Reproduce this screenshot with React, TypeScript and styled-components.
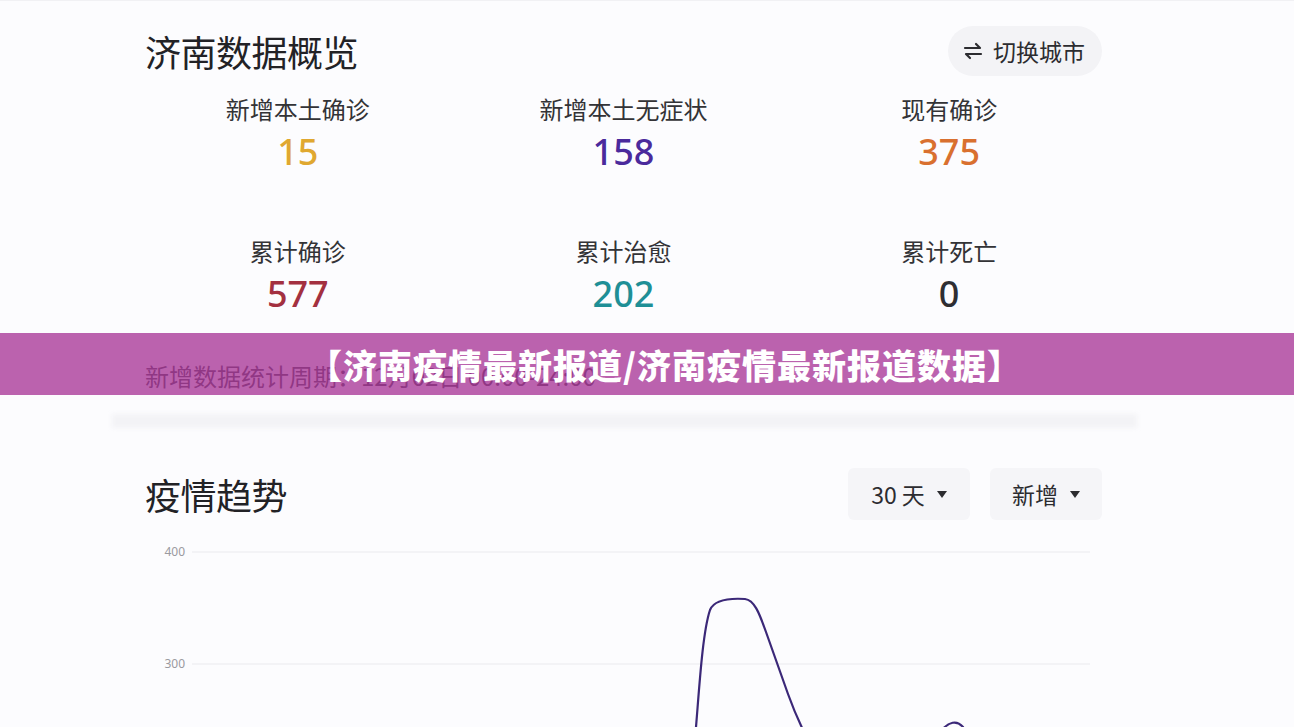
import React from 'react';
import styled, { createGlobalStyle } from 'styled-components';

const GlobalStyle = createGlobalStyle`
  html, body {
    margin: 0;
    padding: 0;
    height: 727px;
    overflow: hidden;
    background: #fcfcfe;
  }
  body {
    font-family: 'Noto Sans CJK SC', 'Noto Sans', sans-serif;
    color: #2a2a2e;
  }
`;

const Page = styled.div`
  position: relative;
  width: 1294px;
  height: 727px;
  overflow: hidden;
  border-top: 1px solid #f1f1f4;
  box-sizing: border-box;
`;

const Card = styled.div`
  width: 1025px;
  margin-left: 112px;
  padding: 25px 33px 0;
  box-sizing: border-box;
`;

const HeaderRow = styled.div`
  display: flex;
  align-items: center;
  justify-content: space-between;
  height: 50px;
`;

const Title = styled.h1`
  margin: 0;
  font-size: 36px;
  font-weight: 400;
  line-height: 50px;
  color: #222226;
  letter-spacing: -0.5px;
`;

const SwitchButton = styled.button`
  display: flex;
  align-items: center;
  gap: 10px;
  height: 50px;
  margin-right: 2px;
  padding: 0 17px 0 15px;
  border: none;
  border-radius: 25px;
  background: #f3f3f6;
  font-family: 'Noto Sans CJK SC', sans-serif;
  font-size: 23px;
  color: #2c2c30;
`;

const StatGrid = styled.div`
  display: grid;
  grid-template-columns: repeat(3, 1fr);
  row-gap: 61px;
  margin: 17px -8px 0 -10px;
`;

const Stat = styled.div`
  display: flex;
  flex-direction: column;
  align-items: center;
  gap: 5px;
`;

const StatLabel = styled.div`
  font-size: 24px;
  line-height: 32px;
  color: #333336;
`;

const StatValue = styled.div<{ $color: string }>`
  font-family: 'Noto Sans', 'Open Sans', sans-serif;
  font-size: 36px;
  font-weight: 500;
  line-height: 44px;
  color: ${(p) => p.$color};
`;

const Period = styled.div`
  margin-top: 44px;
  font-size: 24px;
  line-height: 32px;
  color: #55555c;
`;

const Divider = styled.div`
  height: 14px;
  margin: 22px -33px 0;
  background: #f3f3f6;
  filter: blur(2px);
`;

const SectionRow = styled.div`
  display: flex;
  align-items: center;
  justify-content: space-between;
  margin-top: 40px;
  height: 52px;
`;

const Filters = styled.div`
  display: flex;
  gap: 20px;
  margin-right: 2px;
`;

const Select = styled.button<{ $width: number }>`
  display: flex;
  align-items: center;
  justify-content: center;
  gap: 12px;
  width: ${(p) => p.$width}px;
  height: 52px;
  border: none;
  border-radius: 6px;
  background: #f5f5f8;
  font-family: 'Noto Sans CJK SC', 'Noto Sans', sans-serif;
  font-size: 23px;
  color: #2c2c30;
`;

const Caret = styled.span`
  width: 0;
  height: 0;
  border-left: 5px solid transparent;
  border-right: 5px solid transparent;
  border-top: 7px solid #2c2c30;
`;

const Chart = styled.svg`
  display: block;
  margin-top: 14px;
  overflow: visible;
`;

const Banner = styled.div`
  position: absolute;
  left: 0;
  right: 0;
  top: 332px;
  height: 62px;
  display: flex;
  align-items: center;
  justify-content: center;
  padding-left: 36px;
  box-sizing: border-box;
  background: rgba(164, 44, 146, 0.74);
  color: #ffffff;
  font-family: 'Noto Sans CJK SC', sans-serif;
  font-size: 34px;
  font-weight: 900;
  letter-spacing: 1px;
`;

const stats = [
  { label: '新增本土确诊', value: '15', color: '#e0a830' },
  { label: '新增本土无症状', value: '158', color: '#4a2a9c' },
  { label: '现有确诊', value: '375', color: '#d9702f' },
  { label: '累计确诊', value: '577', color: '#a33040' },
  { label: '累计治愈', value: '202', color: '#1f8f96' },
  { label: '累计死亡', value: '0', color: '#2e2e32' },
];

function SwapIcon() {
  return (
    <svg width="20" height="18" viewBox="0 0 20 18" fill="none">
      <path d="M2 6h15l-4-4" stroke="#2c2c30" strokeWidth="2.2" strokeLinecap="round" strokeLinejoin="round" />
      <path d="M18 12H3l4 4" stroke="#2c2c30" strokeWidth="2.2" strokeLinecap="round" strokeLinejoin="round" />
    </svg>
  );
}

function TrendChart() {
  return (
    <Chart width="959" height="240" viewBox="0 0 959 240">
      <line x1="47" y1="18" x2="945" y2="18" stroke="#f0f0f3" strokeWidth="1.5" />
      <line x1="47" y1="130" x2="945" y2="130" stroke="#f0f0f3" strokeWidth="1.5" />
      <text x="40" y="22" textAnchor="end" fontSize="12" fill="#9a9aa0" fontFamily="Noto Sans, sans-serif">
        400
      </text>
      <text x="40" y="134" textAnchor="end" fontSize="12" fill="#9a9aa0" fontFamily="Noto Sans, sans-serif">
        300
      </text>
      <path
        d="M470 260 C520 260 545 245 550 205 C554 160 557 100 565 76 C569 66 584 64 600 65 C609 66 614 78 621 98 L643 160 C652 185 665 215 690 250 C728 290 765 232 795 198 C804 187 812 186 818 193 C828 208 855 250 915 262"
        stroke="#3b2878"
        strokeWidth="2.2"
        fill="none"
        strokeLinecap="round"
      />
    </Chart>
  );
}

export default function App() {
  return (
    <>
      <GlobalStyle />
      <Page>
        <Card>
          <HeaderRow>
            <Title>济南数据概览</Title>
            <SwitchButton>
              <SwapIcon />
              切换城市
            </SwitchButton>
          </HeaderRow>
          <StatGrid>
            {stats.map((s) => (
              <Stat key={s.label}>
                <StatLabel>{s.label}</StatLabel>
                <StatValue $color={s.color}>{s.value}</StatValue>
              </Stat>
            ))}
          </StatGrid>
          <Period>新增数据统计周期：12月02日 00:00-24:00</Period>
          <Divider />
          <SectionRow>
            <Title>疫情趋势</Title>
            <Filters>
              <Select $width={122}>
                30 天 <Caret />
              </Select>
              <Select $width={112}>
                新增 <Caret />
              </Select>
            </Filters>
          </SectionRow>
          <TrendChart />
        </Card>
        <Banner>【济南疫情最新报道/济南疫情最新报道数据】</Banner>
      </Page>
    </>
  );
}
